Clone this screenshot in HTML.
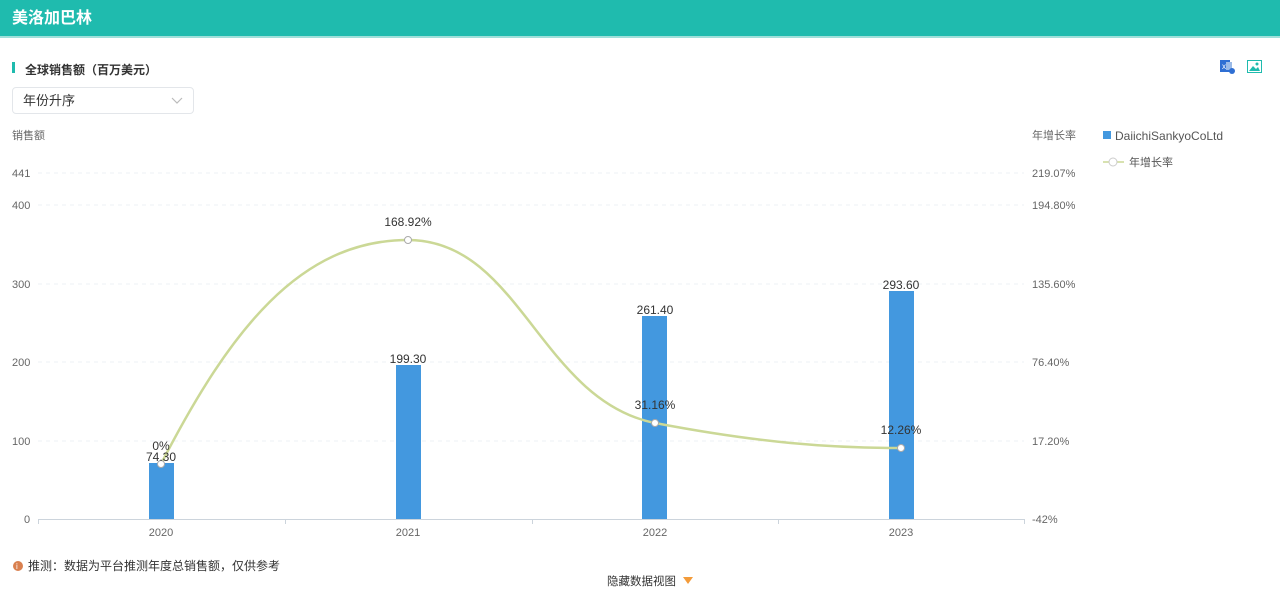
<!DOCTYPE html>
<html><head><meta charset="utf-8"><style>
body{margin:0;width:1280px;height:596px;background:#fff;font-family:"Liberation Sans","Noto Sans CJK SC",sans-serif;overflow:hidden;position:relative}
.hdr{height:38px;background:#1fbbae;color:#fff;font-size:16px;font-weight:bold;line-height:38px;padding-left:12px;border-bottom:2px solid #9fe0da;box-sizing:border-box}
.abs{position:absolute}
</style></head><body>
<div class="hdr">美洛加巴林</div>
<div class="abs" style="left:12px;top:62px;width:3px;height:11px;background:#1fbbae"></div>
<div class="abs" style="left:25px;top:61px;font-size:12px;font-weight:bold;color:#333">全球销售额（百万美元）</div>
<div class="abs" style="left:12px;top:87px;width:182px;height:27px;border:1px solid #e3e6ea;border-radius:4px;font-size:13px;color:#333;line-height:26px;padding-left:10px;box-sizing:border-box">年份升序
<svg style="position:absolute;right:10px;top:9px" width="12" height="8"><path d="M1 1L6 6L11 1" fill="none" stroke="#bbb" stroke-width="1.2"/></svg></div>
<svg class="abs" style="left:1220px;top:59px" width="16" height="15"><rect x="0" y="1" width="10" height="12" fill="#2f6fd3"/><rect x="6" y="3" width="6" height="8" fill="#9bbbe8"/><circle cx="12" cy="12" r="3" fill="#2f6fd3"/><text x="2" y="10" font-size="8" fill="#fff" font-family="Liberation Sans">x</text></svg>
<svg class="abs" style="left:1247px;top:60px" width="15" height="13"><rect x="0.5" y="0.5" width="14" height="12" fill="#fff" stroke="#1fbbae"/><path d="M2 11L6 6L9 9L11 7L13 11Z" fill="#1fbbae"/><circle cx="10" cy="4" r="1.5" fill="#1fbbae"/></svg>
<svg class="abs" style="left:0;top:0" width="1280" height="596" font-family="Liberation Sans,Noto Sans CJK SC,sans-serif">
<g font-size="11" fill="#666">
<text x="12" y="139">销售额</text><text x="1032" y="139">年增长率</text>
<text x="12" y="177">441</text><text x="12" y="209">400</text><text x="12" y="288">300</text><text x="12" y="366">200</text><text x="12" y="445">100</text><text x="24" y="523">0</text>
<text x="1032" y="177">219.07%</text><text x="1032" y="209">194.80%</text><text x="1032" y="288">135.60%</text><text x="1032" y="366">76.40%</text><text x="1032" y="445">17.20%</text><text x="1032" y="523">-42%</text>
<text x="161" y="536" text-anchor="middle">2020</text><text x="408" y="536" text-anchor="middle">2021</text><text x="655" y="536" text-anchor="middle">2022</text><text x="901" y="536" text-anchor="middle">2023</text>
</g>
<g stroke="#eef1f4" stroke-dasharray="4,4"><line x1="38" x2="1024" y1="173" y2="173"/><line x1="38" x2="1024" y1="205" y2="205"/><line x1="38" x2="1024" y1="284" y2="284"/><line x1="38" x2="1024" y1="362" y2="362"/><line x1="38" x2="1024" y1="441" y2="441"/></g>
<g stroke="#ccd4dc"><line x1="38" x2="1024" y1="519.5" y2="519.5"/><line x1="38.5" x2="38.5" y1="519" y2="524"/><line x1="285.5" x2="285.5" y1="519" y2="524"/><line x1="532.5" x2="532.5" y1="519" y2="524"/><line x1="778.5" x2="778.5" y1="519" y2="524"/><line x1="1024.5" x2="1024.5" y1="519" y2="524"/></g>
<g fill="#4398df"><rect x="149" y="463" width="25" height="56"/><rect x="396" y="365" width="25" height="154"/><rect x="642" y="316" width="25" height="203"/><rect x="889" y="291" width="25" height="228"/></g>
<path d="M161 464C230 330 300 240 408 240C520 240 540 400 655 423C760 443 830 448 901 448" fill="none" stroke="#cbd896" stroke-width="2.5"/>
<g fill="#fff" stroke="#aaa"><circle cx="161" cy="464" r="3.5"/><circle cx="408" cy="240" r="3.5"/><circle cx="655" cy="423" r="3.5"/><circle cx="901" cy="448" r="3.5"/></g>
<g font-size="12" fill="#333" text-anchor="middle">
<text x="161" y="450">0%</text><text x="161" y="461">74.30</text><text x="408" y="226">168.92%</text><text x="408" y="363">199.30</text><text x="655" y="314">261.40</text><text x="655" y="409">31.16%</text><text x="901" y="289">293.60</text><text x="901" y="434">12.26%</text>
</g>
<rect x="1103" y="131" width="8" height="8" fill="#4398df"/><text x="1115" y="140" font-size="12" fill="#555">DaiichiSankyoCoLtd</text>
<line x1="1103" x2="1124" y1="162" y2="162" stroke="#cbd896" stroke-width="1.5"/><circle cx="1113" cy="162" r="4" fill="#fff" stroke="#ccc"/><text x="1129" y="166" font-size="11" fill="#555">年增长率</text>
<circle cx="18" cy="566" r="5" fill="#d9804f"/><text x="16" y="569" font-size="8" fill="#fff">i</text>
<text x="28" y="570" font-size="12" fill="#333">推测：数据为平台推测年度总销售额，仅供参考</text>
<text x="607" y="585" font-size="11.5" fill="#333">隐藏数据视图</text>
<path d="M683 577L693 577L688 584Z" fill="#f39b3a"/>
</svg>
</body></html>
